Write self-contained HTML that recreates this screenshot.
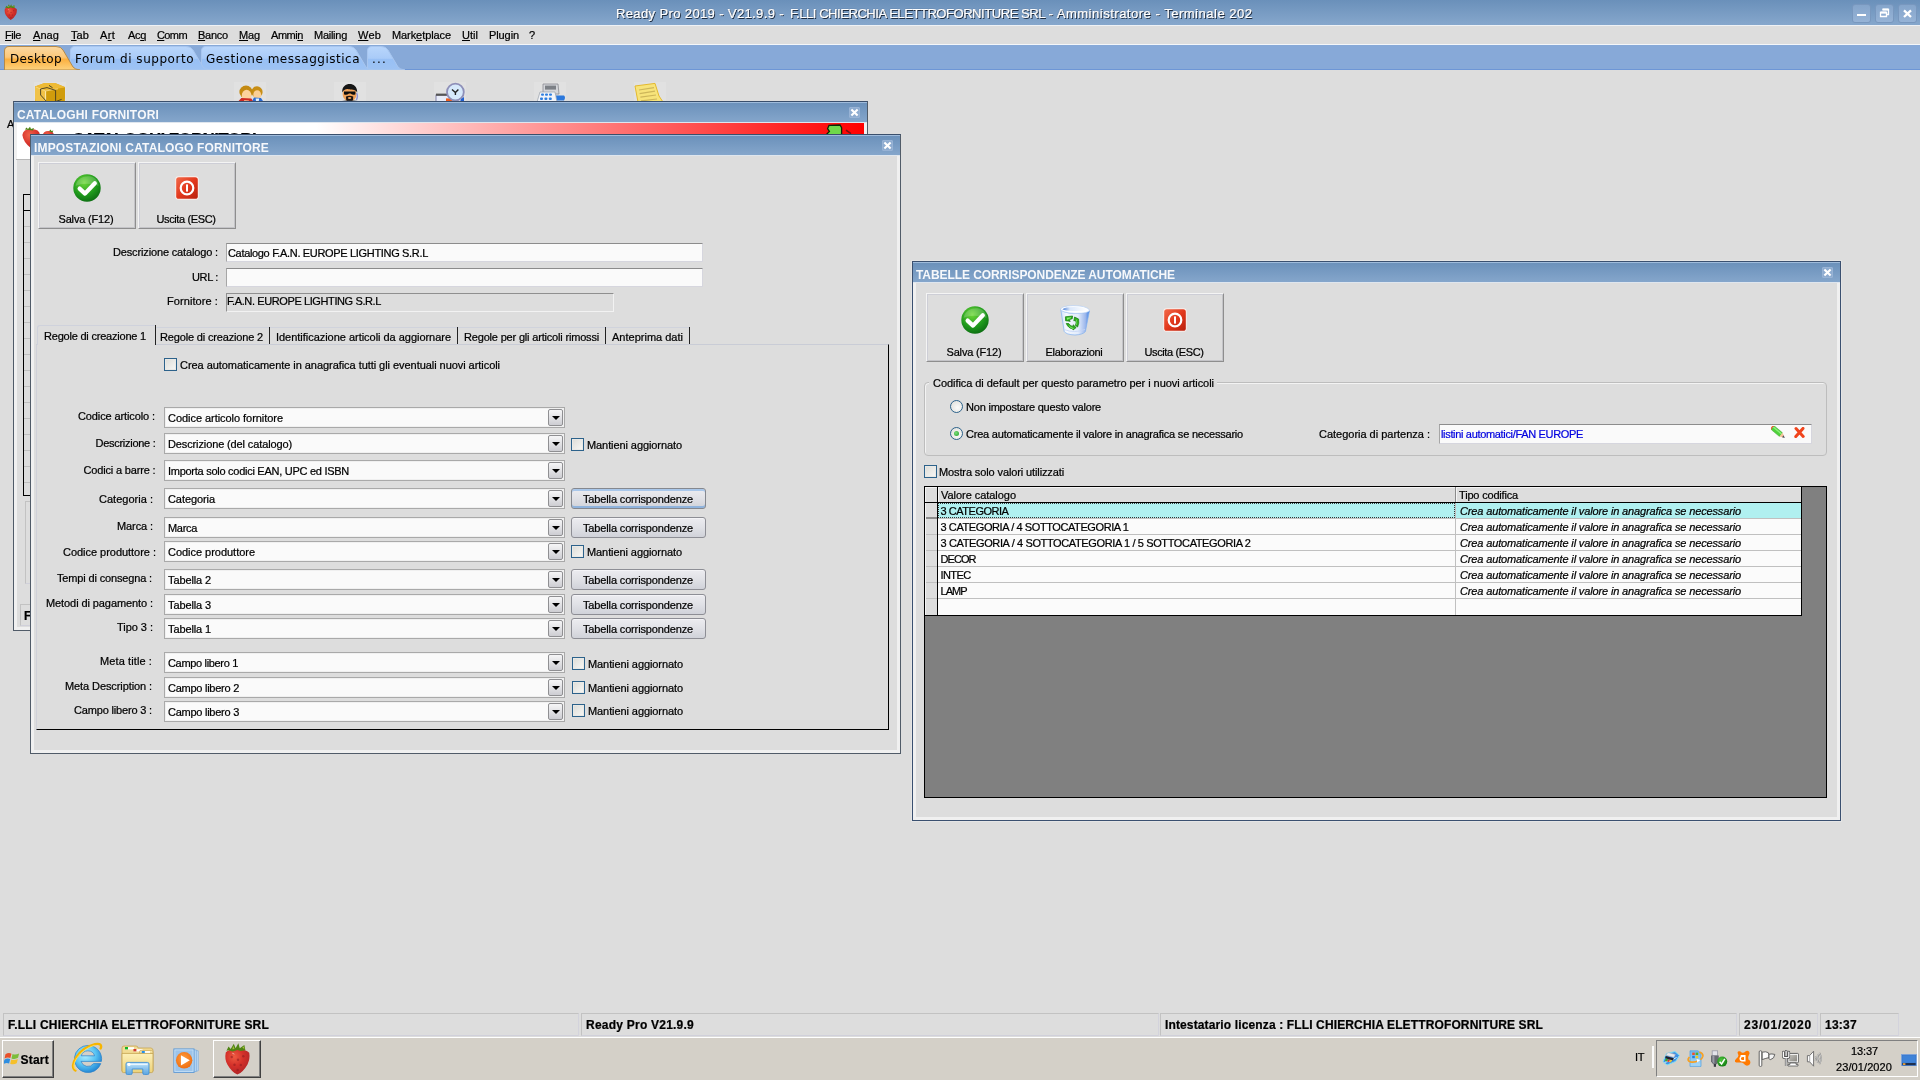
<!DOCTYPE html>
<html lang="it"><head><meta charset="utf-8"><title>Ready Pro 2019 - V21.9.9</title>
<style>
*{box-sizing:border-box;margin:0;padding:0}
html,body{width:1920px;height:1080px;overflow:hidden;background:#dddddd}
body{position:relative;will-change:transform;font:11px/13px 'Liberation Sans',sans-serif;color:#000}
div,span.t,svg{position:absolute}
span.t{white-space:nowrap;-webkit-text-stroke:.22px currentColor}
u{text-decoration:underline;text-underline-offset:1px}
.tb{background:linear-gradient(#6a90ba,#86a7cc)}
.win{background:#dddddd;border:1px solid #3a5070;box-shadow:inset 0 0 0 3px #f0f0f0}
.btn{border:1px solid;border-color:#f4f4f4 #8e8e8e #8e8e8e #f4f4f4;background:#dddddd;box-shadow:inset 1px 1px 0 #cdced6,inset -1px -1px 0 #c4c4c8}
.inp{background:#fafafa;border:1px solid;border-color:#8c8c8c #d6d6de #d6d6de #a6a6a6}
.cmb{background:#fafafa;border:1px solid #a9a9a9;box-shadow:inset 0 0 0 1px #f0f0f0}
.dd{border:1px solid #8f8f92;border-radius:2px;background:linear-gradient(#f6f6f7,#e2e2e5 50%,#cdcdd2)}
.dd:after{content:"";position:absolute;left:3px;top:6px;border:4px solid transparent;border-top:4px solid #000;border-bottom:0}
.chk{border:1px solid #2c628b;background:linear-gradient(135deg,#dcdcd7,#f8f8f6);box-shadow:inset 0 0 0 1px #e9e9e6}
.pb{border:1px solid #8d8e95;border-radius:3px;background:linear-gradient(#ececf0,#e0e1e6 50%,#d0d2d9);box-shadow:inset 0 1px 0 #f4f4f7}
.rad{border:1px solid #2c628b;border-radius:50%;background:radial-gradient(circle at 60% 60%,#fbfbfa,#dcdcd7)}
.sp{border:1px solid;border-color:#c2c2c2 #d3d3dc #d0d0da #c2c2c2}

</style></head>
<body>
<div class="tb" style="left:0px;top:0px;width:1920px;height:25px;"></div>
<div style="left:0px;top:25px;width:1920px;height:1px;background:#eef1f5"></div>
<svg style="left:3.8px;top:3.6px;" width="13.6" height="16.07272727272727" viewBox="0 0 15.4 18.2"><defs><radialGradient id="gsw" cx="38%" cy="30%" r="80%"><stop offset="0" stop-color="#ee5a40"/><stop offset=".45" stop-color="#d4302a"/><stop offset="1" stop-color="#a82226"/></radialGradient></defs><path d="M1 5.4Q.2 9.4 2 12.4Q4.6 16.8 7.6 18Q10.8 16.8 13.4 12.2Q15 9 14.4 5.6Q12 3.2 7.6 3.6Q3 3.2 1 5.4Z" fill="url(#gsw)"/><path d="M1.4 4.4L2.6 2L3.8 3.4L5.6 0.4L6.6 3L8.2 0.2L9 3L11.6 1.2L12.2 4.2L9.6 4.6L7.6 4L5 4.8L2.6 4.2Z" fill="#4f8414"/><path d="M5.2 1.6L6 3.4L4.8 3.6ZM10.4 2.4L11.4 2L11.6 3.6Z" fill="#a9c23c"/><g fill="#8c1a1e" opacity=".55"><circle cx="4.4" cy="8" r=".7"/><circle cx="8" cy="9.6" r=".7"/><circle cx="11" cy="7.6" r=".7"/><circle cx="6" cy="12.4" r=".7"/><circle cx="9.6" cy="12.6" r=".7"/><circle cx="7.8" cy="15.4" r=".7"/></g><path d="M4.4 5.6Q5.6 5.4 6.2 6.6Q5 6.8 4.4 5.6Z" fill="#f6b9a8" opacity=".8"/></svg>
<span class="t" style="letter-spacing:0.374px;font:13px/16px 'Liberation Sans',sans-serif;color:#fff;left:616px;top:6px;text-shadow:1px 1px 0 #1e2c40,0 0 1px #2f4a6e,.5px 0 0 #fff;">Ready Pro 2019 - V21.9.9 -</span>
<span class="t" style="letter-spacing:-0.441px;font:13px/16px 'Liberation Sans',sans-serif;color:#fff;left:790px;top:6px;text-shadow:1px 1px 0 #1e2c40,0 0 1px #2f4a6e,.5px 0 0 #fff;">F.LLI CHIERCHIA ELETTROFORNITURE SRL</span>
<span class="t" style="letter-spacing:0.512px;font:13px/16px 'Liberation Sans',sans-serif;color:#fff;left:1048.5px;top:6px;text-shadow:1px 1px 0 #1e2c40,0 0 1px #2f4a6e,.5px 0 0 #fff;">- Amministratore - Terminale 202</span>
<div style="left:1852px;top:4px;width:19px;height:19px;background:linear-gradient(#85a5cb,#96b3d6);border:1px solid #7897be;border-radius:3px"></div>
<div style="left:1857px;top:14px;width:9px;height:2px;background:#fff"></div>
<div style="left:1875px;top:4px;width:19px;height:19px;background:linear-gradient(#85a5cb,#96b3d6);border:1px solid #7897be;border-radius:3px"></div>
<svg style="left:1879px;top:8px;" width="11" height="11" viewBox="0 0 11 11"><path d="M3.5 1.5H9.5V6.5H7.5M1.5 4.5H7.5V8.5H1.5Z" fill="none" stroke="#fff" stroke-width="1.3"/><path d="M3.5 1.5H9.5M1.5 4.5H7.5" stroke="#fff" stroke-width="2"/></svg>
<div style="left:1898px;top:4px;width:19px;height:19px;background:linear-gradient(#85a5cb,#96b3d6);border:1px solid #7897be;border-radius:3px"></div>
<svg style="left:1902px;top:8px;" width="11" height="11" viewBox="0 0 11 11"><path d="M2 2.4L9 9M9 2.4L2 9" stroke="#fff" stroke-width="2.3"/></svg>
<div style="left:0px;top:26px;width:1920px;height:18px;background:#dddddd"></div>
<div style="left:0px;top:44px;width:1920px;height:1px;background:#f4f6f9"></div>
<span class="t" style="letter-spacing:-0.438px;font:11px/14px 'Liberation Sans',sans-serif;color:#000;left:5px;top:28px;"><u>F</u>ile</span>
<span class="t" style="letter-spacing:0.074px;font:11px/14px 'Liberation Sans',sans-serif;color:#000;left:33px;top:28px;"><u>A</u>nag</span>
<span class="t" style="letter-spacing:0.083px;font:11px/14px 'Liberation Sans',sans-serif;color:#000;left:71px;top:28px;"><u>T</u>ab</span>
<span class="t" style="letter-spacing:0.307px;font:11px/14px 'Liberation Sans',sans-serif;color:#000;left:100px;top:28px;">A<u>r</u>t</span>
<span class="t" style="letter-spacing:-0.323px;font:11px/14px 'Liberation Sans',sans-serif;color:#000;left:128px;top:28px;">Ac<u>q</u></span>
<span class="t" style="letter-spacing:-0.602px;font:11px/14px 'Liberation Sans',sans-serif;color:#000;left:157px;top:28px;"><u>C</u>omm</span>
<span class="t" style="letter-spacing:-0.241px;font:11px/14px 'Liberation Sans',sans-serif;color:#000;left:198px;top:28px;"><u>B</u>anco</span>
<span class="t" style="letter-spacing:-0.141px;font:11px/14px 'Liberation Sans',sans-serif;color:#000;left:239px;top:28px;"><u>M</u>ag</span>
<span class="t" style="letter-spacing:-0.447px;font:11px/14px 'Liberation Sans',sans-serif;color:#000;left:271px;top:28px;">Ammi<u>n</u></span>
<span class="t" style="letter-spacing:-0.266px;font:11px/14px 'Liberation Sans',sans-serif;color:#000;left:314px;top:28px;">Mailin<u>g</u></span>
<span class="t" style="letter-spacing:0.188px;font:11px/14px 'Liberation Sans',sans-serif;color:#000;left:358px;top:28px;"><u>W</u>eb</span>
<span class="t" style="letter-spacing:-0.085px;font:11px/14px 'Liberation Sans',sans-serif;color:#000;left:392px;top:28px;">Mark<u>e</u>tplace</span>
<span class="t" style="letter-spacing:0.023px;font:11px/14px 'Liberation Sans',sans-serif;color:#000;left:462px;top:28px;"><u>U</u>til</span>
<span class="t" style="letter-spacing:-0.096px;font:11px/14px 'Liberation Sans',sans-serif;color:#000;left:489px;top:28px;">Plugin</span>
<span class="t" style="letter-spacing:-0.125px;font:11px/14px 'Liberation Sans',sans-serif;color:#000;left:529px;top:28px;">?</span>
<div style="left:0px;top:45px;width:1920px;height:24px;background:#87a9d8"></div>
<div style="left:0px;top:69px;width:1920px;height:1px;background:#6d96d6"></div>
<svg style="left:367px;top:46px;" width="38" height="24" viewBox="0 0 38 24"><defs><linearGradient id="gtn" x1="0" y1="0" x2="0" y2="1"><stop offset="0" stop-color="#b9d6fb"/><stop offset=".5" stop-color="#a9cbf8"/><stop offset=".55" stop-color="#98c0f5"/><stop offset="1" stop-color="#9ec3f3"/></linearGradient></defs><path d="M.5 24V5Q.5 .5 5 .5H14Q19 .5 21 4L31 21Q33 23.5 38 24Z" fill="url(#gtn)" stroke="#a8c6ef" stroke-width="1"/></svg>
<span class="t" style="letter-spacing:1.182px;font:12px/16px 'DejaVu Sans','Liberation Sans',sans-serif;color:#000;left:372px;top:51px;-webkit-text-stroke:0;">...</span>
<svg style="left:201px;top:46px;" width="172" height="24" viewBox="0 0 172 24"><defs><linearGradient id="gtn" x1="0" y1="0" x2="0" y2="1"><stop offset="0" stop-color="#b9d6fb"/><stop offset=".5" stop-color="#a9cbf8"/><stop offset=".55" stop-color="#98c0f5"/><stop offset="1" stop-color="#9ec3f3"/></linearGradient></defs><path d="M.5 24V5Q.5 .5 5 .5H148Q153 .5 155 4L165 21Q167 23.5 172 24Z" fill="url(#gtn)" stroke="#a8c6ef" stroke-width="1"/></svg>
<span class="t" style="letter-spacing:0.506px;font:12px/16px 'DejaVu Sans','Liberation Sans',sans-serif;color:#000;left:206px;top:51px;-webkit-text-stroke:0;">Gestione messaggistica</span>
<svg style="left:70px;top:46px;" width="140" height="24" viewBox="0 0 140 24"><defs><linearGradient id="gtn" x1="0" y1="0" x2="0" y2="1"><stop offset="0" stop-color="#b9d6fb"/><stop offset=".5" stop-color="#a9cbf8"/><stop offset=".55" stop-color="#98c0f5"/><stop offset="1" stop-color="#9ec3f3"/></linearGradient></defs><path d="M.5 24V5Q.5 .5 5 .5H116Q121 .5 123 4L133 21Q135 23.5 140 24Z" fill="url(#gtn)" stroke="#a8c6ef" stroke-width="1"/></svg>
<span class="t" style="letter-spacing:0.527px;font:12px/16px 'DejaVu Sans','Liberation Sans',sans-serif;color:#000;left:75px;top:51px;-webkit-text-stroke:0;">Forum di supporto</span>
<svg style="left:4px;top:46px;" width="76" height="24" viewBox="0 0 76 24"><defs><linearGradient id="gts" x1="0" y1="0" x2="0" y2="1"><stop offset="0" stop-color="#fbd9a2"/><stop offset=".45" stop-color="#fcc87a"/><stop offset=".55" stop-color="#fbb040"/><stop offset="1" stop-color="#fdd27e"/></linearGradient></defs><path d="M.5 24V5Q.5 .5 5 .5H52Q57 .5 59 4L69 21Q71 23.5 76 24Z" fill="url(#gts)" stroke="#b58a4a" stroke-width="1"/></svg>
<span class="t" style="letter-spacing:0.357px;font:12px/16px 'DejaVu Sans','Liberation Sans',sans-serif;color:#000;left:10px;top:51px;-webkit-text-stroke:0;">Desktop</span>
<div style="left:34px;top:82px;width:32px;height:19px;background:#e1e1e1"></div>
<div style="left:234px;top:82px;width:32px;height:19px;background:#e1e1e1"></div>
<div style="left:334px;top:82px;width:32px;height:19px;background:#e1e1e1"></div>
<div style="left:434px;top:82px;width:32px;height:19px;background:#e1e1e1"></div>
<div style="left:534px;top:82px;width:32px;height:19px;background:#e1e1e1"></div>
<div style="left:634px;top:82px;width:32px;height:19px;background:#e1e1e1"></div>
<svg style="left:34px;top:82px;" width="32" height="20" viewBox="0 0 32 20"><path d="M1 4.4L10.5 1H21L31 5V20H1Z" fill="#e0aa18"/><path d="M1 4.4L11.4 8.6V20H1.6L1 16Z" fill="#f0c248"/><path d="M11.4 8.6L31 5.4V16L29.6 20H11.4Z" fill="#d09c0c"/><path d="M1 4.4L10.5 1H21L31 5.2L11.4 8.8Z" fill="#eeba34"/><path d="M11.6 8.8V20" stroke="#fdeeb4" stroke-width="1"/><path d="M2 5L11.4 9L24 6.8" fill="none" stroke="#f8dc8a" stroke-width=".8"/><path d="M6.6 7V13L13 20M6.6 7L13 5.6L21.6 8.4V19.6L27.6 17.4M15 3.4L18.6 5.8" fill="none" stroke="#3f3a22" stroke-width=".9"/></svg>
<svg style="left:237px;top:84px;" width="28" height="18" viewBox="0 0 28 18"><ellipse cx="20" cy="8" rx="5.6" ry="5.8" fill="#c88e14"/><ellipse cx="20.2" cy="11" rx="3.9" ry="4.8" fill="#fbcf96"/><path d="M14.6 18L17 13.6L24 14L26.6 18Z" fill="#2a6ad0"/><path d="M18.6 14.4H22.2L21.6 18H19.2Z" fill="#dff0fc"/><ellipse cx="9" cy="8" rx="6.6" ry="6.4" fill="#c48a12"/><ellipse cx="9.6" cy="11.4" rx="4.8" ry="5.6" fill="#fdd39c"/><path d="M.6 18L4.4 14L14.4 14.4L16.4 18Z" fill="#cf2a22"/><path d="M7 16L12 16.4L11.6 18H7.4Z" fill="#f6b48a"/></svg>
<svg style="left:339px;top:82px;" width="22" height="20" viewBox="0 0 22 20"><ellipse cx="10.6" cy="12" rx="7" ry="7.6" fill="#f0a25a"/><path d="M3.2 10.6C2.4 -.6 18.6 -.8 18.2 10.4C16 6.4 12 8.4 9 7C6.4 6.8 4.4 8 3.2 10.6Z" fill="#151515"/><path d="M5 9.6H16.4V12.2Q14 13.6 11.6 11.4H10Q7.4 13.6 5 12.2Z" fill="#0c0c0c"/><path d="M7 14.4Q10.6 13 14.2 14.4Q14.6 18 12.6 19.6H8.6Q6.6 18 7 14.4Z" fill="#201612"/><ellipse cx="10.6" cy="16" rx="1.7" ry="1" fill="#f0a25a"/><path d="M17.6 11Q19.4 14 17.4 18" fill="none" stroke="#8f96d8" stroke-width="1.4"/><path d="M3 19L7 18.4H14.6L18.6 19V20H3Z" fill="#3a3a3a"/></svg>
<svg style="left:435px;top:82px;" width="32" height="20" viewBox="0 0 32 20"><rect x="1" y="13" width="16" height="7" fill="#e8ecf8" stroke="#6a6a9a" stroke-width=".8"/><rect x="1" y="11.6" width="14" height="2.2" fill="#555"/><rect x="11" y="16.4" width="6" height="3.6" fill="#ee5a1c"/><circle cx="20.4" cy="10" r="8.4" fill="#d6e9fb" stroke="#8e8fb8" stroke-width="1.8"/><path d="M17 7.4L20.4 10.6L23.4 7.4M20.4 10.6V13" stroke="#222" stroke-width="1.4" fill="none"/><path d="M26 17L29 15V20H25Z" fill="#1f5fd0"/></svg>
<svg style="left:535px;top:82px;" width="32" height="20" viewBox="0 0 32 20"><path d="M8 2H23L24 12H8Z" fill="#d4d6da" stroke="#8a8c92" stroke-width=".8"/><rect x="10" y="3.6" width="11" height="4" fill="#7c8086"/><path d="M2 20L5 10H20L22 20Z" fill="#f2f4f8" stroke="#9aa0aa" stroke-width=".7"/><g fill="#2f7fe0"><rect x="6" y="11.4" width="3" height="2.4" rx="1"/><rect x="10" y="11.4" width="3" height="2.4" rx="1"/><rect x="14" y="11.4" width="3" height="2.4" rx="1"/><rect x="5" y="15.4" width="3" height="2.6" rx="1"/><rect x="9.4" y="15.4" width="3" height="2.6" rx="1"/><rect x="13.8" y="15.4" width="3" height="2.6" rx="1"/></g><path d="M21 13.4H29Q31 15.4 29 18.4H22Z" fill="#2b78dc"/></svg>
<svg style="left:633px;top:82px;" width="32" height="20" viewBox="0 0 32 20"><path d="M2 4L22 1.4L26 14L30 20H5Z" fill="#f7e37a" stroke="#e4b92c" stroke-width="1"/><path d="M6 8L21 5.6M6.6 11.6L22 9.2M7.4 15.2L23 13M8 18.8L24 17" stroke="#cdb65a" stroke-width="1.2"/></svg>
<span class="t" style="font:11px/13px 'Liberation Sans',sans-serif;color:#000;left:7px;top:118px;">A</span>
<div class="win" style="left:13px;top:101px;width:855px;height:530px;border-color:#3a4f6c #505b68 #505b68 #505b68"></div>
<div class="tb" style="left:14px;top:102px;width:853px;height:21px;"></div>
<div style="left:14px;top:102px;width:853px;height:1px;background:#9fbbdb"></div>
<div style="left:14px;top:122px;width:853px;height:1px;background:#dfe6ee"></div>
<span class="t" style="letter-spacing:0.176px;font:bold 12px/14px 'Liberation Sans',sans-serif;color:#f6f8fb;left:17px;top:108px;-webkit-text-stroke:0;">CATALOGHI FORNITORI</span>
<div style="left:849px;top:107px;width:11px;height:11px;background:#8eacd0;border:1px solid #98b3d5;border-radius:1px"></div>
<svg style="left:850px;top:108px;" width="9" height="9" viewBox="0 0 9 9"><path d="M1.4 1.4L7.6 7.6M7.6 1.4L1.4 7.6" stroke="#fff" stroke-width="2.1"/></svg>
<div style="left:17px;top:123px;width:847px;height:37px;background:linear-gradient(90deg,#fff 0,#fff 35.3%,#ff0000 100%)"></div>
<div style="left:16px;top:159px;width:848px;height:1px;background:#b8b8b8"></div>
<svg style="left:20px;top:126px;" width="36" height="26" viewBox="0 0 36 26"><defs><radialGradient id="gs2" cx="40%" cy="30%" r="75%"><stop offset="0" stop-color="#f0634a"/><stop offset=".6" stop-color="#d8342c"/><stop offset="1" stop-color="#b02424"/></radialGradient></defs><path d="M2.4 9Q3 3 11 3Q19.6 3 20 9Q20 16 11.4 22.6Q3 16 2.4 9Z" fill="url(#gs2)"/><path d="M5 3.6L6.4 1.4L8 3L10 .8L11 3L14 2L13 4.4L9 4Z" fill="#4f8414"/><path d="M22.6 10Q23 5 28.4 5Q34 5 34 10Q34 15 28.4 20Q23 15 22.6 10Z" fill="url(#gs2)"/><path d="M29 5.2L30.6 3.6L31.4 5L33.4 4.6L32.4 6.4Z" fill="#4f8414"/></svg>
<span class="t" style="letter-spacing:-0.655px;font:bold 17px/20px 'Liberation Sans',sans-serif;color:#000;left:72px;top:130px;">CATALOGHI FORNITORI</span>
<svg style="left:824px;top:124px;" width="32" height="12" viewBox="0 0 32 12"><path d="M5 1.4L16 1L17.6 3.6V10L16 12H1L5.4 7.4L3.6 4.6Z" fill="#6fd84a" stroke="#0a2a06" stroke-width="1.3"/><path d="M22 6.2L27 9.6" stroke="#7a1010" stroke-width="1.6"/></svg>
<div style="left:23px;top:194px;width:400px;height:302px;background:#dddddd;border:1px solid #000"></div>
<div style="left:23px;top:210px;width:400px;height:1px;background:#000"></div>
<div style="left:24px;top:226px;width:8px;height:1px;background:#bfbfbf"></div>
<div style="left:24px;top:242px;width:8px;height:1px;background:#bfbfbf"></div>
<div style="left:24px;top:258px;width:8px;height:1px;background:#bfbfbf"></div>
<div style="left:24px;top:274px;width:8px;height:1px;background:#bfbfbf"></div>
<div style="left:24px;top:290px;width:8px;height:1px;background:#bfbfbf"></div>
<div style="left:24px;top:306px;width:8px;height:1px;background:#bfbfbf"></div>
<div style="left:24px;top:322px;width:8px;height:1px;background:#bfbfbf"></div>
<div style="left:24px;top:338px;width:8px;height:1px;background:#bfbfbf"></div>
<div style="left:24px;top:354px;width:8px;height:1px;background:#bfbfbf"></div>
<div style="left:24px;top:370px;width:8px;height:1px;background:#bfbfbf"></div>
<div style="left:24px;top:386px;width:8px;height:1px;background:#bfbfbf"></div>
<div style="left:24px;top:402px;width:8px;height:1px;background:#bfbfbf"></div>
<div style="left:24px;top:418px;width:8px;height:1px;background:#bfbfbf"></div>
<div style="left:24px;top:434px;width:8px;height:1px;background:#bfbfbf"></div>
<div style="left:24px;top:450px;width:8px;height:1px;background:#bfbfbf"></div>
<div style="left:24px;top:466px;width:8px;height:1px;background:#bfbfbf"></div>
<div style="left:24px;top:482px;width:8px;height:1px;background:#bfbfbf"></div>
<div class="sp" style="left:25px;top:501px;width:300px;height:83px;"></div>
<div class="sp" style="left:20px;top:604px;width:300px;height:22px;"></div>
<span class="t" style="font:bold 12px/14px 'Liberation Sans',sans-serif;color:#000;left:24px;top:609px;">F</span>
<div class="win" style="left:30px;top:134px;width:871px;height:620px;border-color:#3a4f6c #505b68 #505b68 #505b68"></div>
<div class="tb" style="left:31px;top:135px;width:869px;height:21px;"></div>
<div style="left:31px;top:135px;width:869px;height:1px;background:#9fbbdb"></div>
<div style="left:31px;top:155px;width:869px;height:1px;background:#dfe6ee"></div>
<span class="t" style="letter-spacing:0.168px;font:bold 12px/14px 'Liberation Sans',sans-serif;color:#f6f8fb;left:34px;top:141px;-webkit-text-stroke:0;">IMPOSTAZIONI CATALOGO FORNITORE</span>
<div style="left:882px;top:140px;width:11px;height:11px;background:#8eacd0;border:1px solid #98b3d5;border-radius:1px"></div>
<svg style="left:883px;top:141px;" width="9" height="9" viewBox="0 0 9 9"><path d="M1.4 1.4L7.6 7.6M7.6 1.4L1.4 7.6" stroke="#fff" stroke-width="2.1"/></svg>
<div class="btn" style="left:38px;top:162px;width:98px;height:67px;"></div>
<svg style="left:73.0px;top:174.0px;" width="28" height="28" viewBox="0 0 28 28"><defs><radialGradient id="gck" cx="40%" cy="30%" r="75%"><stop offset="0" stop-color="#6fd83a"/><stop offset=".6" stop-color="#1f9a1c"/><stop offset="1" stop-color="#0c6a12"/></radialGradient></defs><circle cx="14" cy="14" r="13.7" fill="url(#gck)"/><path d="M2.6 12C4 4 12 1.4 18 2.6C24 4 26 10 25.4 12C20 9 8 9 2.6 12Z" fill="#fff" opacity=".18"/><path d="M6.6 14.6L12 19.6L21.8 9.2" fill="none" stroke="#fff" stroke-width="4.2" stroke-linecap="round" stroke-linejoin="round"/></svg>
<span class="t" style="letter-spacing:-0.169px;font:11px/13px 'Liberation Sans',sans-serif;color:#000;left:58.5px;top:213px;">Salva (F12)</span>
<div class="btn" style="left:138px;top:162px;width:98px;height:67px;"></div>
<svg style="left:175.0px;top:175.5px;" width="24" height="24" viewBox="0 0 24 24"><defs><linearGradient id="gpw" x1="0" y1="0" x2="1" y2="1"><stop offset="0" stop-color="#f26a4a"/><stop offset=".5" stop-color="#e2381c"/><stop offset="1" stop-color="#b81f0c"/></linearGradient></defs><rect x=".3" y=".3" width="23.4" height="23.4" rx="3" fill="#fbeeea"/><rect x="1.2" y="1.2" width="21.6" height="21.6" rx="2.6" fill="url(#gpw)"/><circle cx="12" cy="12" r="6.3" fill="none" stroke="#fff" stroke-width="2.2"/><rect x="11" y="8.4" width="2" height="7.2" fill="#fff"/></svg>
<span class="t" style="letter-spacing:-0.380px;font:11px/13px 'Liberation Sans',sans-serif;color:#000;left:156.5px;top:213px;">Uscita (ESC)</span>
<span class="t" style="letter-spacing:-0.147px;font:11px/13px 'Liberation Sans',sans-serif;color:#000;left:113px;top:246px;">Descrizione catalogo :</span>
<span class="t" style="letter-spacing:-0.344px;font:11px/13px 'Liberation Sans',sans-serif;color:#000;left:192px;top:271px;">URL :</span>
<span class="t" style="letter-spacing:0.078px;font:11px/13px 'Liberation Sans',sans-serif;color:#000;left:167px;top:295px;">Fornitore :</span>
<div class="inp" style="left:226px;top:243px;width:477px;height:19px;"></div>
<span class="t" style="letter-spacing:-0.328px;font:11px/13px 'Liberation Sans',sans-serif;color:#000;left:228px;top:247px;">Catalogo F.A.N. EUROPE LIGHTING S.R.L</span>
<div class="inp" style="left:226px;top:268px;width:477px;height:19px;"></div>
<div style="left:226px;top:293px;width:388px;height:19px;background:#dddddd;border:1px solid;border-color:#8f8f8f #f2f2f2 #f2f2f2 #8f8f8f"></div>
<span class="t" style="letter-spacing:-0.395px;font:11px/13px 'Liberation Sans',sans-serif;color:#000;left:227px;top:295px;">F.A.N. EUROPE LIGHTING S.R.L</span>
<div style="left:36px;top:344px;width:853px;height:386px;border:1px solid;border-color:#c9ccd6 #000 #000 #d0d1d9"></div>
<div style="left:37px;top:325px;width:118px;height:20px;background:#dddddd;border:1px solid #cfd2dc;border-bottom:0;border-right:0;border-radius:3px 0 0 0"></div>
<span class="t" style="letter-spacing:-0.210px;font:11px/13px 'Liberation Sans',sans-serif;color:#000;left:44px;top:330px;">Regole di creazione 1</span>
<div style="left:155px;top:325px;width:1px;height:20px;background:#222"></div>
<span class="t" style="letter-spacing:-0.162px;font:11px/13px 'Liberation Sans',sans-serif;color:#000;left:160px;top:331px;">Regole di creazione 2</span>
<div style="left:269px;top:327px;width:1px;height:17px;background:#222"></div>
<div style="left:156px;top:327px;width:113px;height:1px;background:#d0d3dc"></div>
<span class="t" style="letter-spacing:-0.029px;font:11px/13px 'Liberation Sans',sans-serif;color:#000;left:276px;top:331px;">Identificazione articoli da aggiornare</span>
<div style="left:457px;top:327px;width:1px;height:17px;background:#222"></div>
<div style="left:270px;top:327px;width:187px;height:1px;background:#d0d3dc"></div>
<span class="t" style="letter-spacing:-0.181px;font:11px/13px 'Liberation Sans',sans-serif;color:#000;left:464px;top:331px;">Regole per gli articoli rimossi</span>
<div style="left:605px;top:327px;width:1px;height:17px;background:#222"></div>
<div style="left:458px;top:327px;width:147px;height:1px;background:#d0d3dc"></div>
<span class="t" style="letter-spacing:0.004px;font:11px/13px 'Liberation Sans',sans-serif;color:#000;left:612px;top:331px;">Anteprima dati</span>
<div style="left:689px;top:327px;width:1px;height:17px;background:#222"></div>
<div style="left:606px;top:327px;width:83px;height:1px;background:#d0d3dc"></div>
<div class="chk" style="left:164px;top:358px;width:13px;height:13px;"></div>
<span class="t" style="letter-spacing:-0.050px;font:11px/13px 'Liberation Sans',sans-serif;color:#000;left:180px;top:359px;">Crea automaticamente in anagrafica tutti gli eventuali nuovi articoli</span>
<span class="t" style="letter-spacing:-0.110px;font:11px/13px 'Liberation Sans',sans-serif;color:#000;left:78px;top:410px;">Codice articolo :</span>
<div class="cmb" style="left:164px;top:407px;width:401px;height:21px;"></div>
<span class="t" style="letter-spacing:-0.047px;font:11px/13px 'Liberation Sans',sans-serif;color:#000;left:168px;top:412px;">Codice articolo fornitore</span>
<div class="dd" style="left:548px;top:409px;width:15px;height:17px;"></div>
<span class="t" style="letter-spacing:-0.275px;font:11px/13px 'Liberation Sans',sans-serif;color:#000;left:95.5px;top:437px;">Descrizione :</span>
<div class="cmb" style="left:164px;top:433px;width:401px;height:21px;"></div>
<span class="t" style="letter-spacing:-0.122px;font:11px/13px 'Liberation Sans',sans-serif;color:#000;left:168px;top:438px;">Descrizione (del catalogo)</span>
<div class="dd" style="left:548px;top:435px;width:15px;height:17px;"></div>
<div class="chk" style="left:571px;top:438px;width:13px;height:13px;"></div>
<span class="t" style="letter-spacing:-0.086px;font:11px/13px 'Liberation Sans',sans-serif;color:#000;left:587px;top:439px;">Mantieni aggiornato</span>
<span class="t" style="letter-spacing:-0.162px;font:11px/13px 'Liberation Sans',sans-serif;color:#000;left:83.5px;top:464px;">Codici a barre :</span>
<div class="cmb" style="left:164px;top:460px;width:401px;height:21px;"></div>
<span class="t" style="letter-spacing:-0.271px;font:11px/13px 'Liberation Sans',sans-serif;color:#000;left:168px;top:465px;">Importa solo codici EAN, UPC ed ISBN</span>
<div class="dd" style="left:548px;top:462px;width:15px;height:17px;"></div>
<span class="t" style="letter-spacing:0.017px;font:11px/13px 'Liberation Sans',sans-serif;color:#000;left:99px;top:493px;">Categoria :</span>
<div class="cmb" style="left:164px;top:488px;width:401px;height:21px;"></div>
<span class="t" style="letter-spacing:-0.078px;font:11px/13px 'Liberation Sans',sans-serif;color:#000;left:168px;top:493px;">Categoria</span>
<div class="dd" style="left:548px;top:490px;width:15px;height:17px;"></div>
<div class="pb" style="left:571px;top:488px;width:135px;height:21px;border-color:#85888f;box-shadow:inset 0 2px 0 #a9c7ea,inset 0 -2px 0 #8fb3dd;"></div>
<span class="t" style="letter-spacing:-0.143px;font:11px/13px 'Liberation Sans',sans-serif;color:#000;left:583px;top:493px;">Tabella corrispondenze</span>
<span class="t" style="letter-spacing:-0.098px;font:11px/13px 'Liberation Sans',sans-serif;color:#000;left:117px;top:520px;">Marca :</span>
<div class="cmb" style="left:164px;top:517px;width:401px;height:21px;"></div>
<span class="t" style="letter-spacing:-0.312px;font:11px/13px 'Liberation Sans',sans-serif;color:#000;left:168px;top:522px;">Marca</span>
<div class="dd" style="left:548px;top:519px;width:15px;height:17px;"></div>
<div class="pb" style="left:571px;top:517px;width:135px;height:21px;"></div>
<span class="t" style="letter-spacing:-0.143px;font:11px/13px 'Liberation Sans',sans-serif;color:#000;left:583px;top:522px;">Tabella corrispondenze</span>
<span class="t" style="letter-spacing:-0.030px;font:11px/13px 'Liberation Sans',sans-serif;color:#000;left:63px;top:546px;">Codice produttore :</span>
<div class="cmb" style="left:164px;top:541px;width:401px;height:21px;"></div>
<span class="t" style="letter-spacing:-0.027px;font:11px/13px 'Liberation Sans',sans-serif;color:#000;left:168px;top:546px;">Codice produttore</span>
<div class="dd" style="left:548px;top:543px;width:15px;height:17px;"></div>
<div class="chk" style="left:571px;top:545px;width:13px;height:13px;"></div>
<span class="t" style="letter-spacing:-0.086px;font:11px/13px 'Liberation Sans',sans-serif;color:#000;left:587px;top:546px;">Mantieni aggiornato</span>
<span class="t" style="letter-spacing:-0.150px;font:11px/13px 'Liberation Sans',sans-serif;color:#000;left:57px;top:572px;">Tempi di consegna :</span>
<div class="cmb" style="left:164px;top:569px;width:401px;height:21px;"></div>
<span class="t" style="letter-spacing:-0.116px;font:11px/13px 'Liberation Sans',sans-serif;color:#000;left:168px;top:574px;">Tabella 2</span>
<div class="dd" style="left:548px;top:571px;width:15px;height:17px;"></div>
<div class="pb" style="left:571px;top:569px;width:135px;height:21px;"></div>
<span class="t" style="letter-spacing:-0.143px;font:11px/13px 'Liberation Sans',sans-serif;color:#000;left:583px;top:574px;">Tabella corrispondenze</span>
<span class="t" style="letter-spacing:-0.089px;font:11px/13px 'Liberation Sans',sans-serif;color:#000;left:46px;top:597px;">Metodi di pagamento :</span>
<div class="cmb" style="left:164px;top:594px;width:401px;height:21px;"></div>
<span class="t" style="letter-spacing:-0.116px;font:11px/13px 'Liberation Sans',sans-serif;color:#000;left:168px;top:599px;">Tabella 3</span>
<div class="dd" style="left:548px;top:596px;width:15px;height:17px;"></div>
<div class="pb" style="left:571px;top:594px;width:135px;height:21px;"></div>
<span class="t" style="letter-spacing:-0.143px;font:11px/13px 'Liberation Sans',sans-serif;color:#000;left:583px;top:599px;">Tabella corrispondenze</span>
<span class="t" style="letter-spacing:-0.035px;font:11px/13px 'Liberation Sans',sans-serif;color:#000;left:117px;top:621px;">Tipo 3 :</span>
<div class="cmb" style="left:164px;top:618px;width:401px;height:21px;"></div>
<span class="t" style="letter-spacing:-0.116px;font:11px/13px 'Liberation Sans',sans-serif;color:#000;left:168px;top:623px;">Tabella 1</span>
<div class="dd" style="left:548px;top:620px;width:15px;height:17px;"></div>
<div class="pb" style="left:571px;top:618px;width:135px;height:21px;"></div>
<span class="t" style="letter-spacing:-0.143px;font:11px/13px 'Liberation Sans',sans-serif;color:#000;left:583px;top:623px;">Tabella corrispondenze</span>
<span class="t" style="letter-spacing:0.104px;font:11px/13px 'Liberation Sans',sans-serif;color:#000;left:100px;top:655px;">Meta title :</span>
<div class="cmb" style="left:164px;top:652px;width:401px;height:21px;"></div>
<span class="t" style="letter-spacing:-0.328px;font:11px/13px 'Liberation Sans',sans-serif;color:#000;left:168px;top:657px;">Campo libero 1</span>
<div class="dd" style="left:548px;top:654px;width:15px;height:17px;"></div>
<div class="chk" style="left:572px;top:657px;width:13px;height:13px;"></div>
<span class="t" style="letter-spacing:-0.086px;font:11px/13px 'Liberation Sans',sans-serif;color:#000;left:588px;top:658px;">Mantieni aggiornato</span>
<span class="t" style="letter-spacing:-0.092px;font:11px/13px 'Liberation Sans',sans-serif;color:#000;left:65px;top:680px;">Meta Description :</span>
<div class="cmb" style="left:164px;top:677px;width:401px;height:21px;"></div>
<span class="t" style="letter-spacing:-0.257px;font:11px/13px 'Liberation Sans',sans-serif;color:#000;left:168px;top:682px;">Campo libero 2</span>
<div class="dd" style="left:548px;top:679px;width:15px;height:17px;"></div>
<div class="chk" style="left:572px;top:681px;width:13px;height:13px;"></div>
<span class="t" style="letter-spacing:-0.086px;font:11px/13px 'Liberation Sans',sans-serif;color:#000;left:588px;top:682px;">Mantieni aggiornato</span>
<span class="t" style="letter-spacing:-0.170px;font:11px/13px 'Liberation Sans',sans-serif;color:#000;left:74px;top:704px;">Campo libero 3 :</span>
<div class="cmb" style="left:164px;top:701px;width:401px;height:21px;"></div>
<span class="t" style="letter-spacing:-0.257px;font:11px/13px 'Liberation Sans',sans-serif;color:#000;left:168px;top:706px;">Campo libero 3</span>
<div class="dd" style="left:548px;top:703px;width:15px;height:17px;"></div>
<div class="chk" style="left:572px;top:704px;width:13px;height:13px;"></div>
<span class="t" style="letter-spacing:-0.086px;font:11px/13px 'Liberation Sans',sans-serif;color:#000;left:588px;top:705px;">Mantieni aggiornato</span>
<div class="win" style="left:912px;top:261px;width:929px;height:560px;box-shadow:inset 0 0 0 3px #f0f0f0,0 0 0 1px #e5e5e5"></div>
<div class="tb" style="left:913px;top:262px;width:927px;height:21px;"></div>
<div style="left:913px;top:262px;width:927px;height:1px;background:#9fbbdb"></div>
<div style="left:913px;top:282px;width:927px;height:1px;background:#dfe6ee"></div>
<span class="t" style="letter-spacing:-0.075px;font:bold 12px/14px 'Liberation Sans',sans-serif;color:#f6f8fb;left:916px;top:268px;-webkit-text-stroke:0;">TABELLE CORRISPONDENZE AUTOMATICHE</span>
<div style="left:1822px;top:267px;width:11px;height:11px;background:#8eacd0;border:1px solid #98b3d5;border-radius:1px"></div>
<svg style="left:1823px;top:268px;" width="9" height="9" viewBox="0 0 9 9"><path d="M1.4 1.4L7.6 7.6M7.6 1.4L1.4 7.6" stroke="#fff" stroke-width="2.1"/></svg>
<div class="btn" style="left:926px;top:293px;width:98px;height:69px;"></div>
<svg style="left:961.0px;top:306.0px;" width="28" height="28" viewBox="0 0 28 28"><defs><radialGradient id="gck" cx="40%" cy="30%" r="75%"><stop offset="0" stop-color="#6fd83a"/><stop offset=".6" stop-color="#1f9a1c"/><stop offset="1" stop-color="#0c6a12"/></radialGradient></defs><circle cx="14" cy="14" r="13.7" fill="url(#gck)"/><path d="M2.6 12C4 4 12 1.4 18 2.6C24 4 26 10 25.4 12C20 9 8 9 2.6 12Z" fill="#fff" opacity=".18"/><path d="M6.6 14.6L12 19.6L21.8 9.2" fill="none" stroke="#fff" stroke-width="4.2" stroke-linecap="round" stroke-linejoin="round"/></svg>
<span class="t" style="letter-spacing:-0.169px;font:11px/13px 'Liberation Sans',sans-serif;color:#000;left:946.5px;top:346px;">Salva (F12)</span>
<div class="btn" style="left:1026px;top:293px;width:98px;height:69px;"></div>
<svg style="left:1060.0px;top:304.59999999999997px;" width="30" height="31" viewBox="0 0 30 31"><defs><linearGradient id="gbn" x1="0" y1="0" x2="1" y2="0"><stop offset="0" stop-color="#cfe0fa"/><stop offset=".18" stop-color="#f4f8fe"/><stop offset=".6" stop-color="#e3ecfb"/><stop offset=".86" stop-color="#9db8ec"/><stop offset="1" stop-color="#3f7fe0"/></linearGradient><linearGradient id="gbr" x1="0" y1="0" x2="1" y2="0"><stop offset="0" stop-color="#4a7fd8"/><stop offset=".3" stop-color="#dbe8fb"/><stop offset="1" stop-color="#ffffff"/></linearGradient></defs><path d="M.8 4.6L4.2 26.4Q6 29.6 15 30Q23 29.6 25.4 26.6L29.4 6Q22 9.4 13 8.6Q4 7.8 .8 4.6Z" fill="url(#gbn)" stroke="#7fb0f0" stroke-width=".7"/><path d="M.6 4.4Q1 1 13 .6Q26 .6 29.6 5Q29 8.6 15 8.4Q2 7.6 .6 4.4Z" fill="#fdfeff" stroke="#a9c8f4" stroke-width=".6"/><path d="M2.4 4.2Q5 2 14 2Q24 2.2 27.6 4.8Q22 6.4 13 6Q5 5.8 2.4 4.2Z" fill="url(#gbr)"/><path d="M4.6 24.6Q14 28.6 25 24.4" fill="none" stroke="#c5d6f6" stroke-width=".8"/><g transform="translate(0 1.4)"><g fill="#2fae1e" stroke="#137a0c" stroke-width=".7" stroke-linejoin="round"><path d="M5.6 14.4L5.4 10.4L12.6 9.6L12.2 12.4Q9.6 12.4 9 14.6L10.4 14.8Z"/><path d="M14.6 10.6L18.6 12.6Q19.4 17 17.6 20.6L15.4 19Q16.8 16.4 15.6 14L13.8 14.4Z"/><path d="M6.2 17L8.8 17.2Q10.6 20 13 20L13.2 18.4L16.2 21.2L13 23.6L12.8 22.4Q8.4 22 6.2 17Z"/></g><path d="M6.6 11.4L11 10.8L10.8 11.8Q8.4 12.2 7.4 13.6ZM16.4 13Q17.8 16 17 18.8L16.4 18.4Q17.2 15.6 15.8 13.4ZM8.4 18.4Q10.4 21 13.4 21.6L13.6 22.6Q10.2 22.2 8.4 18.4Z" fill="#86f070"/></g></svg>
<span class="t" style="letter-spacing:-0.296px;font:11px/13px 'Liberation Sans',sans-serif;color:#000;left:1045.5px;top:346px;">Elaborazioni</span>
<div class="btn" style="left:1126px;top:293px;width:98px;height:69px;"></div>
<svg style="left:1163.0px;top:307.5px;" width="24" height="24" viewBox="0 0 24 24"><defs><linearGradient id="gpw" x1="0" y1="0" x2="1" y2="1"><stop offset="0" stop-color="#f26a4a"/><stop offset=".5" stop-color="#e2381c"/><stop offset="1" stop-color="#b81f0c"/></linearGradient></defs><rect x=".3" y=".3" width="23.4" height="23.4" rx="3" fill="#fbeeea"/><rect x="1.2" y="1.2" width="21.6" height="21.6" rx="2.6" fill="url(#gpw)"/><circle cx="12" cy="12" r="6.3" fill="none" stroke="#fff" stroke-width="2.2"/><rect x="11" y="8.4" width="2" height="7.2" fill="#fff"/></svg>
<span class="t" style="letter-spacing:-0.380px;font:11px/13px 'Liberation Sans',sans-serif;color:#000;left:1144.5px;top:346px;">Uscita (ESC)</span>
<div style="left:924px;top:382px;width:903px;height:74px;border:1px solid #bdbdbd;border-radius:4px;box-shadow:inset 1px 1px 0 #f3f3f3"></div>
<div style="left:929px;top:377px;width:288px;height:13px;background:#dddddd"></div>
<span class="t" style="letter-spacing:-0.055px;font:11px/13px 'Liberation Sans',sans-serif;color:#000;left:933px;top:377px;">Codifica di default per questo parametro per i nuovi articoli</span>
<div class="rad" style="left:950px;top:400px;width:13px;height:13px;"></div>
<span class="t" style="letter-spacing:-0.209px;font:11px/13px 'Liberation Sans',sans-serif;color:#000;left:966px;top:401px;">Non impostare questo valore</span>
<div class="rad" style="left:950px;top:427px;width:13px;height:13px;"></div>
<div style="left:954px;top:431px;width:5px;height:5px;border-radius:50%;background:radial-gradient(circle at 40% 40%,#7be07a,#1f9a28)"></div>
<span class="t" style="letter-spacing:-0.211px;font:11px/13px 'Liberation Sans',sans-serif;color:#000;left:966px;top:428px;">Crea automaticamente il valore in anagrafica se necessario</span>
<span class="t" style="letter-spacing:-0.013px;font:11px/13px 'Liberation Sans',sans-serif;color:#000;left:1319px;top:428px;">Categoria di partenza :</span>
<div class="inp" style="left:1439px;top:424px;width:373px;height:20px;"></div>
<span class="t" style="letter-spacing:-0.331px;font:11px/13px 'Liberation Sans',sans-serif;color:#0000e0;left:1441px;top:428px;">listini automatici/FAN EUROPE</span>
<svg style="left:1771px;top:425.6px;" width="16" height="14" viewBox="0 0 16 14"><g transform="rotate(40 8 7)"><rect x="-.4" y="4.6" width="11" height="4.8" rx=".6" fill="#4fd23a" stroke="#3aa02a" stroke-width=".5"/><rect x="-.4" y="5.4" width="11" height="1.4" fill="#8af07a"/><path d="M-.4 4.6Q-2 7 -.4 9.4" fill="none" stroke="#e8502a" stroke-width="1"/><path d="M10.6 4.6L14 6.2V7.8L10.6 9.4Z" fill="#f6c09a"/><path d="M13 5.8L15.6 7L13 8.2Z" fill="#4a4f58"/></g></svg>
<svg style="left:1793.6px;top:427.4px;" width="11" height="11" viewBox="0 0 11 11"><path d="M2 1.6L9.2 9.4M9 1.4L1.8 9.6" stroke="#f0441c" stroke-width="3" stroke-linecap="round"/></svg>
<div class="chk" style="left:924px;top:465px;width:13px;height:13px;"></div>
<span class="t" style="letter-spacing:-0.116px;font:11px/13px 'Liberation Sans',sans-serif;color:#000;left:939px;top:466px;">Mostra solo valori utilizzati</span>
<div style="left:924px;top:486px;width:903px;height:312px;background:#808080;border:1px solid #000"></div>
<div style="left:925px;top:487px;width:877px;height:129px;background:#fbfbfb"></div>
<div style="left:925px;top:487px;width:877px;height:15px;background:#dddddd"></div>
<div style="left:925px;top:503px;width:12px;height:112px;background:#dddddd"></div>
<div style="left:925px;top:487px;width:876px;height:1px;background:#f4f4f4"></div>
<div style="left:925px;top:487px;width:1px;height:128px;background:#f4f4f4"></div>
<div style="left:938px;top:487px;width:1px;height:15px;background:#f4f4f4"></div>
<div style="left:1456px;top:487px;width:1px;height:15px;background:#f4f4f4"></div>
<div style="left:938px;top:503px;width:863px;height:15px;background:#b0f0f0"></div>
<div style="left:938px;top:503px;width:517px;height:15px;border:1px dotted #333"></div>
<div style="left:926px;top:518px;width:875px;height:1px;background:#c0c0c0"></div>
<div style="left:926px;top:534px;width:875px;height:1px;background:#c0c0c0"></div>
<div style="left:926px;top:550px;width:875px;height:1px;background:#c0c0c0"></div>
<div style="left:926px;top:566px;width:875px;height:1px;background:#c0c0c0"></div>
<div style="left:926px;top:582px;width:875px;height:1px;background:#c0c0c0"></div>
<div style="left:926px;top:598px;width:875px;height:1px;background:#c0c0c0"></div>
<div style="left:926px;top:517px;width:11px;height:2px;background:#8c8c8c"></div>
<div style="left:1455px;top:487px;width:1px;height:16px;background:#8a8a8a"></div>
<div style="left:1455px;top:503px;width:1px;height:112px;background:#c0c0c0"></div>
<div style="left:925px;top:502px;width:877px;height:1px;background:#000"></div>
<div style="left:925px;top:615px;width:877px;height:1px;background:#000"></div>
<div style="left:1801px;top:487px;width:1px;height:129px;background:#000"></div>
<div style="left:937px;top:487px;width:1px;height:129px;background:#000"></div>
<span class="t" style="letter-spacing:-0.042px;font:11px/13px 'Liberation Sans',sans-serif;color:#000;left:941px;top:489px;">Valore catalogo</span>
<span class="t" style="letter-spacing:-0.180px;font:11px/13px 'Liberation Sans',sans-serif;color:#000;left:1459px;top:489px;">Tipo codifica</span>
<span class="t" style="letter-spacing:-0.469px;font:11px/13px 'Liberation Sans',sans-serif;color:#000;left:940.5px;top:505px;">3 CATEGORIA</span>
<span class="t" style="letter-spacing:-0.142px;font:italic 11px/13px 'Liberation Sans',sans-serif;color:#000;left:1460px;top:505px;">Crea automaticamente il valore in anagrafica se necessario</span>
<span class="t" style="letter-spacing:-0.410px;font:11px/13px 'Liberation Sans',sans-serif;color:#000;left:940.5px;top:521px;">3 CATEGORIA / 4 SOTTOCATEGORIA 1</span>
<span class="t" style="letter-spacing:-0.142px;font:italic 11px/13px 'Liberation Sans',sans-serif;color:#000;left:1460px;top:521px;">Crea automaticamente il valore in anagrafica se necessario</span>
<span class="t" style="letter-spacing:-0.371px;font:11px/13px 'Liberation Sans',sans-serif;color:#000;left:940.5px;top:537px;">3 CATEGORIA / 4 SOTTOCATEGORIA 1 / 5 SOTTOCATEGORIA 2</span>
<span class="t" style="letter-spacing:-0.142px;font:italic 11px/13px 'Liberation Sans',sans-serif;color:#000;left:1460px;top:537px;">Crea automaticamente il valore in anagrafica se necessario</span>
<span class="t" style="letter-spacing:-0.947px;font:11px/13px 'Liberation Sans',sans-serif;color:#000;left:940.5px;top:553px;">DECOR</span>
<span class="t" style="letter-spacing:-0.142px;font:italic 11px/13px 'Liberation Sans',sans-serif;color:#000;left:1460px;top:553px;">Crea automaticamente il valore in anagrafica se necessario</span>
<span class="t" style="letter-spacing:-0.600px;font:11px/13px 'Liberation Sans',sans-serif;color:#000;left:940.5px;top:569px;">INTEC</span>
<span class="t" style="letter-spacing:-0.142px;font:italic 11px/13px 'Liberation Sans',sans-serif;color:#000;left:1460px;top:569px;">Crea automaticamente il valore in anagrafica se necessario</span>
<span class="t" style="letter-spacing:-0.992px;font:11px/13px 'Liberation Sans',sans-serif;color:#000;left:940.5px;top:585px;">LAMP</span>
<span class="t" style="letter-spacing:-0.142px;font:italic 11px/13px 'Liberation Sans',sans-serif;color:#000;left:1460px;top:585px;">Crea automaticamente il valore in anagrafica se necessario</span>
<div style="left:0px;top:1011px;width:1920px;height:26px;background:#dddddd"></div>
<div class="sp" style="left:3px;top:1013px;width:576px;height:23px;"></div>
<span class="t" style="letter-spacing:0.207px;font:bold 12px/14px 'Liberation Sans',sans-serif;color:#000;left:8px;top:1018px;">F.LLI CHIERCHIA ELETTROFORNITURE SRL</span>
<div class="sp" style="left:581px;top:1013px;width:578px;height:23px;"></div>
<span class="t" style="letter-spacing:0.232px;font:bold 12px/14px 'Liberation Sans',sans-serif;color:#000;left:586px;top:1018px;">Ready Pro V21.9.9</span>
<div class="sp" style="left:1160px;top:1013px;width:577px;height:23px;"></div>
<span class="t" style="letter-spacing:0.134px;font:bold 12px/14px 'Liberation Sans',sans-serif;color:#000;left:1165px;top:1018px;">Intestatario licenza : FLLI CHIERCHIA ELETTROFORNITURE SRL</span>
<div class="sp" style="left:1739px;top:1013px;width:79px;height:23px;"></div>
<span class="t" style="letter-spacing:0.794px;font:bold 12px/14px 'Liberation Sans',sans-serif;color:#000;left:1744px;top:1018px;">23/01/2020</span>
<div class="sp" style="left:1820px;top:1013px;width:79px;height:23px;"></div>
<span class="t" style="letter-spacing:0.259px;font:bold 12px/14px 'Liberation Sans',sans-serif;color:#000;left:1825px;top:1018px;">13:37</span>
<div style="left:0px;top:1037px;width:1920px;height:43px;background:#d4d0c8;border-top:1px solid #fff"></div>
<div style="left:2px;top:1040px;width:52px;height:38px;background:#d4d0c8;border:1px solid;border-color:#fff #404040 #404040 #fff;box-shadow:inset -1px -1px 0 #808080"></div>
<svg style="left:4.2px;top:1050.2px;" width="16.4" height="16.4" viewBox="0 0 18 18"><path d="M1.6 4.6Q5 2.4 8.2 4L7 8.8Q3.8 7.4 .6 9.4Z" fill="#e8502a"/><path d="M9.4 4.4Q12.6 6 16.6 3.8L15.4 8.6Q12 10.6 8.2 9.2Z" fill="#7cbd3a"/><path d="M.4 10.6Q3.6 8.6 6.8 10L5.6 14.8Q2.6 13.4 -.6 15.4Z" fill="#2f8ee0"/><path d="M8 10.4Q11.4 12 15.2 9.8L14 14.6Q10.6 16.6 6.8 15.2Z" fill="#f6c02a"/></svg>
<span class="t" style="letter-spacing:0.231px;font:bold 12px/14px 'Liberation Sans',sans-serif;color:#000;left:20.5px;top:1052.5px;">Start</span>
<svg style="left:71px;top:1042px;" width="32" height="32" viewBox="0 0 32 32"><defs><radialGradient id="gie" cx="40%" cy="35%" r="70%"><stop offset="0" stop-color="#b5f0ff"/><stop offset=".55" stop-color="#58c3f3"/><stop offset="1" stop-color="#1c7fd0"/></radialGradient></defs><path d="M17 3.4A13.6 13.6 0 1 0 29.8 21.6H22.6A7.2 7.2 0 0 1 10 19.4H30.4A13.6 13.6 0 0 0 17 3.4ZM10.2 13.8A7 7 0 0 1 23.6 13.8Z" fill="url(#gie)" stroke="#2a7fc8" stroke-width=".7" fill-rule="evenodd"/><path d="M4.4 28.6C-3 24 8 6 24 2.2C29.4 1 31 3.4 29.6 6.4" fill="none" stroke="#f7b500" stroke-width="2.4" stroke-linecap="round"/><path d="M4.6 27.6C-1 23 9 7.4 23.6 3.4" fill="none" stroke="#ffe46a" stroke-width=".9"/></svg>
<svg style="left:120.6px;top:1045.4px;" width="33" height="30" viewBox="0 0 33 30"><defs><linearGradient id="gfo" x1="0" y1="0" x2="0" y2="1"><stop offset="0" stop-color="#fdf0b8"/><stop offset="1" stop-color="#ecd27a"/></linearGradient><linearGradient id="gfb" x1="0" y1="0" x2="0" y2="1"><stop offset="0" stop-color="#bfe4fa"/><stop offset="1" stop-color="#5aa4e0"/></linearGradient></defs><path d="M1 3Q1 1 3 1H15Q17 1 17 3H30Q32 3.4 32 5.4V26H1Z" fill="#f2dc94" stroke="#c8a654" stroke-width=".8"/><rect x="4" y="2.2" width="9" height="2.2" fill="#fff"/><rect x="4" y="2" width="3" height="2.4" fill="#14b428"/><rect x="12.6" y="4.2" width="9" height="2.2" fill="#fff"/><rect x="12.4" y="4" width="3" height="2.4" fill="#d03a2c"/><path d="M18.6 8.4V6.6Q18.6 5.4 20 5.4H30.6Q32 5.6 32 7V8.4Z" fill="#f6e4a4" stroke="#c8a654" stroke-width=".7"/><rect x="21" y="6.2" width="8" height="2.2" fill="#fff"/><rect x="20.8" y="6" width="3" height="2.4" fill="#1e90f0"/><path d="M1 8.4H32V26Q32 27.6 30.4 27.6H2.6Q1 27.6 1 26Z" fill="url(#gfo)" stroke="#c4a24e" stroke-width=".8"/><path d="M5 19Q5 17.4 6.6 17.4H26.4Q28 17.4 28 19V28Q28 29.6 26.4 29.6H23.4Q21.8 29.6 21.8 28V24H11.2V28Q11.2 29.6 9.6 29.6H6.6Q5 29.6 5 28Z" fill="url(#gfb)" stroke="#3f8fd6" stroke-width=".9"/><path d="M6.4 19.4H26.6" stroke="#e9f6ff" stroke-width="1.4"/><circle cx="8" cy="19.4" r="1.6" fill="#fff"/></svg>
<svg style="left:172.8px;top:1047.6px;" width="27.4" height="25.6" viewBox="0 0 29 27"><defs><radialGradient id="gmp" cx="45%" cy="40%" r="65%"><stop offset="0" stop-color="#ffa040"/><stop offset="1" stop-color="#ee6a0e"/></radialGradient></defs><path d="M23 2.4L26.8 3V24L23 25Z" fill="#c4def4" stroke="#6fa4d8" stroke-width=".6"/><path d="M21 1.6L25 2.2V24.6L21 25.6Z" fill="#b3d3f0" stroke="#6fa4d8" stroke-width=".6"/><rect x=".9" y=".9" width="21.4" height="25" fill="#9cc4ea" stroke="#5d98d4" stroke-width=".9"/><rect x="2" y="2" width="19.2" height="22.8" fill="none" stroke="#c9e2f8" stroke-width=".8"/><circle cx="11.8" cy="13" r="8.7" fill="url(#gmp)"/><path d="M8.4 7.6L17.8 13L8.4 18.6Z" fill="#fff"/></svg>
<div style="left:213px;top:1040px;width:48px;height:38px;background:#d4d0c8;border:1px solid;border-color:#fff #404040 #404040 #fff;box-shadow:inset -1px -1px 0 #808080"></div>
<svg style="left:224.4px;top:1042.6px;" width="27" height="31.909090909090907" viewBox="0 0 15.4 18.2"><defs><radialGradient id="gsw" cx="38%" cy="30%" r="80%"><stop offset="0" stop-color="#ee5a40"/><stop offset=".45" stop-color="#d4302a"/><stop offset="1" stop-color="#a82226"/></radialGradient></defs><path d="M1 5.4Q.2 9.4 2 12.4Q4.6 16.8 7.6 18Q10.8 16.8 13.4 12.2Q15 9 14.4 5.6Q12 3.2 7.6 3.6Q3 3.2 1 5.4Z" fill="url(#gsw)"/><path d="M1.4 4.4L2.6 2L3.8 3.4L5.6 0.4L6.6 3L8.2 0.2L9 3L11.6 1.2L12.2 4.2L9.6 4.6L7.6 4L5 4.8L2.6 4.2Z" fill="#4f8414"/><path d="M5.2 1.6L6 3.4L4.8 3.6ZM10.4 2.4L11.4 2L11.6 3.6Z" fill="#a9c23c"/><g fill="#8c1a1e" opacity=".55"><circle cx="4.4" cy="8" r=".7"/><circle cx="8" cy="9.6" r=".7"/><circle cx="11" cy="7.6" r=".7"/><circle cx="6" cy="12.4" r=".7"/><circle cx="9.6" cy="12.6" r=".7"/><circle cx="7.8" cy="15.4" r=".7"/></g><path d="M4.4 5.6Q5.6 5.4 6.2 6.6Q5 6.8 4.4 5.6Z" fill="#f6b9a8" opacity=".8"/></svg>
<span class="t" style="letter-spacing:-0.391px;font:11px/13px 'Liberation Sans',sans-serif;color:#000;left:1635px;top:1051px;">IT</span>
<div style="left:1652px;top:1046px;width:2px;height:22px;background:#fbfbfb"></div>
<div style="left:1656px;top:1040px;width:262px;height:37px;border:1px solid;border-color:#808080 #fff #fff #808080"></div>
<svg style="left:1662px;top:1050px;" width="18" height="16" viewBox="0 0 18 16"><path d="M1 11.6L4.6 3.4L13 1.6L17.4 5.4L13.6 11.4L5 15Z" fill="#3f8fe6" stroke="#7fe0f6" stroke-width="1"/><path d="M2.6 12.4L9 10.6L14.6 7.4" fill="none" stroke="#d8f6fc" stroke-width="1"/><path d="M3.8 5.2L6 2.6L13.4 4.4L12 7.4Z" fill="#e9e9ec" stroke="#a8a8b0" stroke-width=".5"/><path d="M3.6 6L11.8 8.2L11 10.4L3.2 8.2Z" fill="#20222c"/><path d="M4 8.6L6 9.2L4.6 11.4L3 10.8Z" fill="#3fb020"/><path d="M6.4 9.2L8.2 9.8L6.6 12L5 11.6Z" fill="#e03a20"/><path d="M8.6 9.8L10.2 10.2L8.6 12.4L7 12Z" fill="#f0c020"/></svg>
<svg style="left:1686px;top:1050px;" width="18" height="17" viewBox="0 0 18 17"><defs><linearGradient id="gdc" x1="0" y1="0" x2="0" y2="1"><stop offset="0" stop-color="#6fb6ee"/><stop offset="1" stop-color="#a9d8f6"/></linearGradient></defs><path d="M4 .8H12L15 3.6V16.4H4Z" fill="url(#gdc)" stroke="#4f9fe0" stroke-width=".7"/><rect x="6.2" y="2.6" width="2.6" height="2.4" fill="#f0502a"/><rect x="9.6" y="2.6" width="2.6" height="2.4" fill="#4fb02a"/><rect x="6.2" y="5.8" width="2.6" height="2.4" fill="#1f7fe0"/><rect x="9.6" y="5.8" width="2.6" height="2.4" fill="#f6c81e"/><path d="M3.4 7Q.2 10.4 4.6 12Q9 12.8 12.4 10.6" fill="none" stroke="#f8a020" stroke-width="1.7"/><path d="M13.4 2Q17.6 3.6 16.8 6.4Q16 8.6 14.4 9.6" fill="none" stroke="#f8a020" stroke-width="1.6"/><path d="M10.6 9L14.2 10L11.4 12.4Z" fill="#fff"/></svg>
<svg style="left:1710px;top:1050px;" width="18" height="17" viewBox="0 0 18 17"><defs><radialGradient id="gus" cx="40%" cy="35%" r="70%"><stop offset="0" stop-color="#4fc83a"/><stop offset="1" stop-color="#0f7a12"/></radialGradient></defs><rect x="2.2" y=".8" width="5.4" height="5" fill="#e4e4ea" stroke="#9a9aa8" stroke-width=".8"/><path d="M1 5.6H8.8V11.4L6.6 14.2H3.2L1 11.4Z" fill="#686a72"/><path d="M2.4 5.8H4.4V13.6H3.6L2.4 11.6Z" fill="#9a9ca6"/><rect x="3.8" y="14" width="2.2" height="2.8" fill="#3a3c44"/><circle cx="12.2" cy="11.6" r="5" fill="url(#gus)"/><path d="M9.6 11.8L11.6 14L14.8 8.8" fill="none" stroke="#fff" stroke-width="1.5"/></svg>
<svg style="left:1734px;top:1050px;" width="17" height="16.4" viewBox="0 0 17 16.4"><path d="M4 1.6Q6 .8 7.6 2.4Q9.4 3.6 11.4 1.6Q13 .2 15 1.4Q16.2 3 15 4.8Q13.4 7.4 14.4 9.6Q16.8 10.6 16.4 13Q15.6 15.8 13 15.8Q11 15.6 9.6 13.6Q8.4 12.4 6.6 12.6H2.2Q.4 12 1 10.2Q2.4 8.2 4 7Q5 5.4 3.8 3.6Q3.2 2.4 4 1.6Z" fill="#ff7a00"/><path d="M6.6 5.8H10.8V11.4M10.6 6.4Q6.4 5.8 6.2 8.6Q6.4 11.6 10.6 10.6" fill="none" stroke="#fff" stroke-width="1.5"/></svg>
<svg style="left:1758px;top:1050px;" width="18" height="17" viewBox="0 0 18 17"><rect x="1.2" y=".8" width="2.6" height="15.6" rx="1.1" fill="#fff" stroke="#555" stroke-width=".9"/><path d="M4.2 2.2Q8 1.2 10.2 2.6Q11 4 11 7.6Q8 8.2 4.2 9.6Z" fill="#fcfcfc" stroke="#555" stroke-width=".9"/><path d="M11 4.2Q14 3.6 16.8 4.4Q16.4 8.6 12.6 9.6Q11.4 9.6 11 8.6Z" fill="#f4f4f4" stroke="#555" stroke-width=".9"/></svg>
<svg style="left:1782px;top:1050px;" width="18" height="17" viewBox="0 0 18 17"><defs><linearGradient id="gmn" x1="0" y1="0" x2="1" y2="1"><stop offset="0" stop-color="#c4c2bc"/><stop offset="1" stop-color="#8a8882"/></linearGradient></defs><rect x="5.8" y="3.4" width="10.6" height="9.4" rx=".8" fill="#fff" stroke="#555" stroke-width=".9"/><rect x="7.2" y="4.8" width="7.8" height="6.6" fill="url(#gmn)"/><path d="M8 13H14V14.4H16V16H6V14.4H8Z" fill="#fff" stroke="#555" stroke-width=".8"/><path d="M1.4 2V6.4Q1.4 7.6 2.6 7.6H5.6Q6.8 7.6 6.8 6.4V2M4.1 1V5.4" fill="none" stroke="#555" stroke-width="2.6" stroke-linecap="round"/><path d="M1.4 2V6.4Q1.4 7.6 2.6 7.6H5.6Q6.8 7.6 6.8 6.4V2M4.1 1V5.4" fill="none" stroke="#fff" stroke-width="1.2" stroke-linecap="round"/><path d="M4.1 8V16" stroke="#555" stroke-width="2.4"/><path d="M4.1 8V16" stroke="#fff" stroke-width="1"/></svg>
<svg style="left:1806px;top:1050px;" width="18" height="17" viewBox="0 0 18 17"><path d="M1.4 5.6H3.6L7.6 1.2V16.2L3.6 11.8H1.4Z" fill="#fdfdfd" stroke="#666" stroke-width=".9" stroke-linejoin="round"/><path d="M3.7 5.6V11.8" stroke="#888" stroke-width=".7"/><path d="M9.4 6.4Q10.6 8.6 9.4 10.8M11.4 4.6Q13.6 8.6 11.4 12.6M13.4 3Q16.8 8.6 13.4 14.2" fill="none" stroke="#6a6a6a" stroke-width="1.5"/><path d="M9.4 6.4Q10.6 8.6 9.4 10.8M11.4 4.6Q13.6 8.6 11.4 12.6M13.4 3Q16.8 8.6 13.4 14.2" fill="none" stroke="#fafafa" stroke-width=".7"/></svg>
<span class="t" style="letter-spacing:-0.106px;font:11px/13px 'Liberation Sans',sans-serif;color:#000;left:1851px;top:1045px;">13:37</span>
<span class="t" style="letter-spacing:0.094px;font:11px/13px 'Liberation Sans',sans-serif;color:#000;left:1836px;top:1061px;">23/01/2020</span>
<svg style="left:1900.6px;top:1053.6px;" width="16" height="12.4" viewBox="0 0 16 12.4"><rect x=".4" y=".4" width="15.2" height="11.6" fill="#3a74c8" stroke="#7fa6dc" stroke-width=".8"/><rect x="1.4" y="1.4" width="13.2" height="7.4" fill="#3f83d8"/><rect x="1.4" y="9" width="13.2" height="2.2" fill="#1c2f50"/><rect x="2" y="9.2" width="2.4" height="1.8" fill="#e8a03a"/></svg>
</body></html>
